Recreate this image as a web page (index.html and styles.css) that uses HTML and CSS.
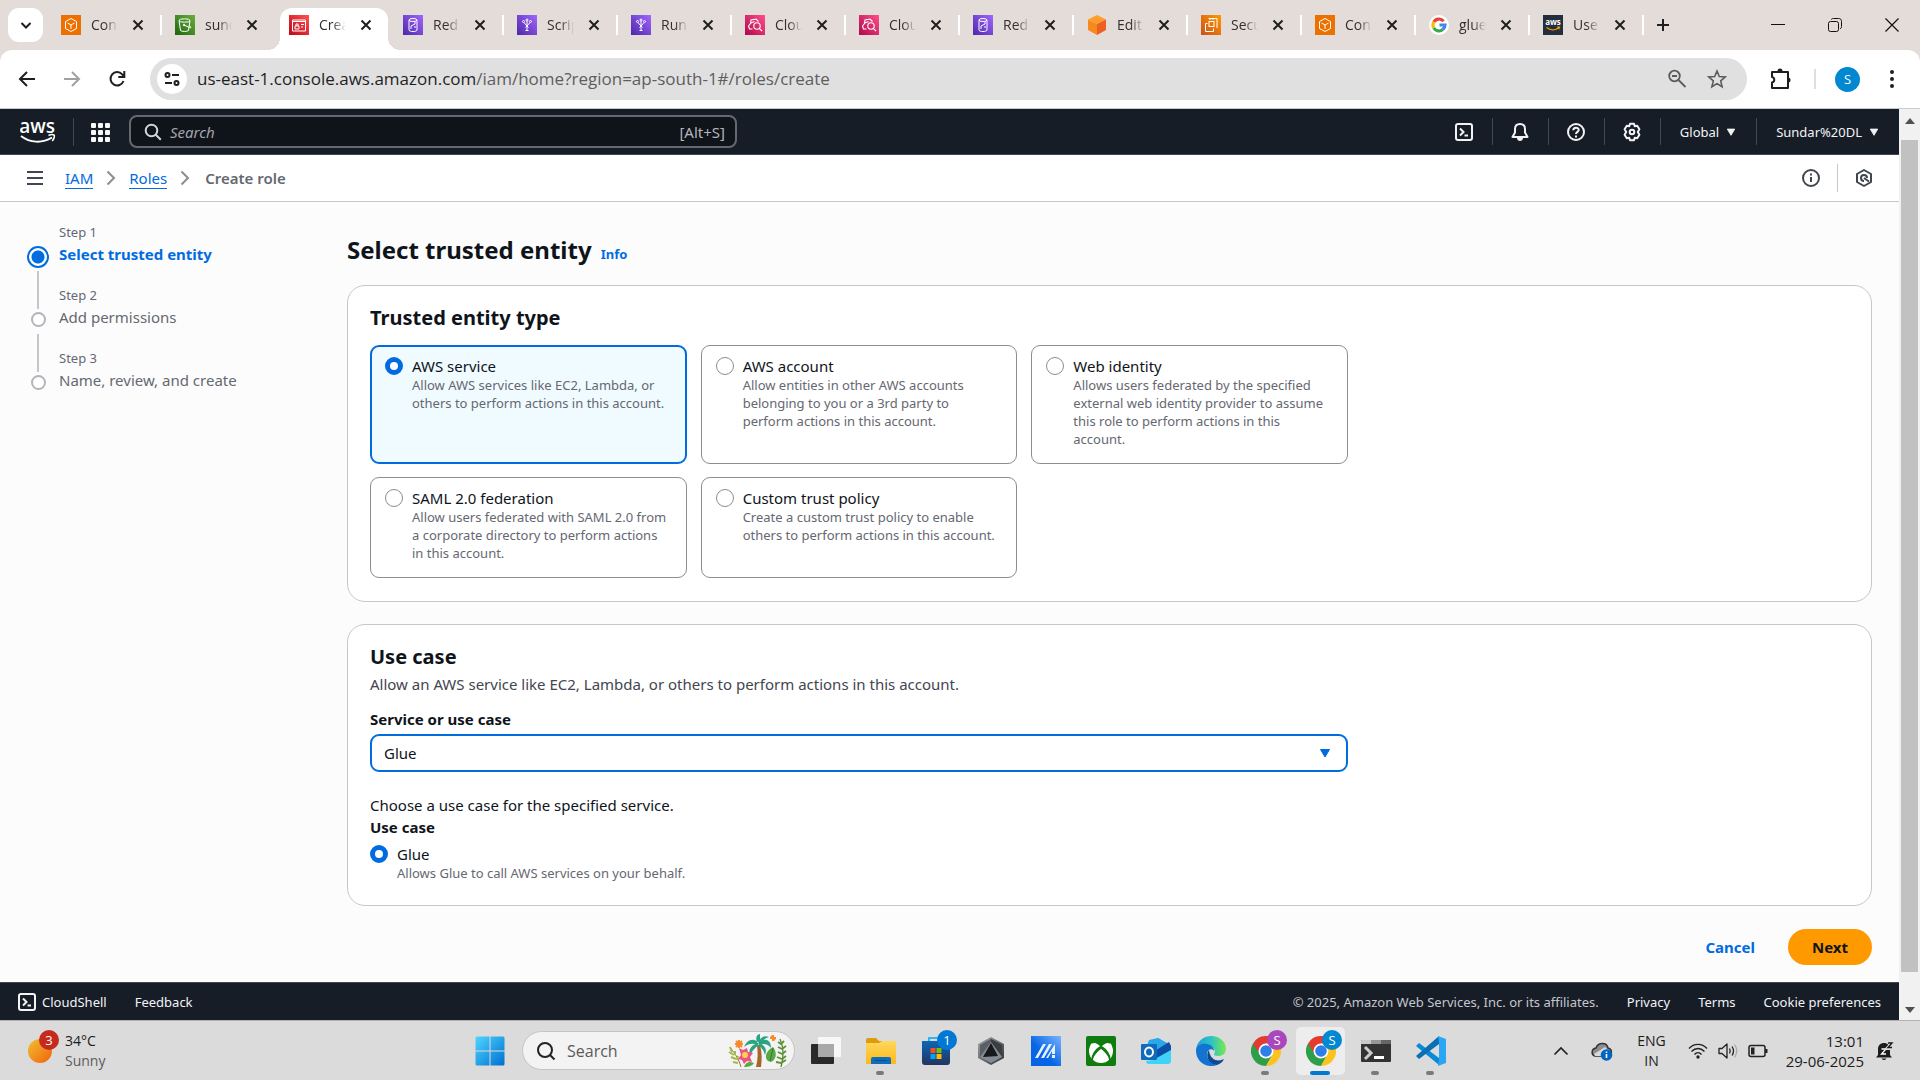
FILE: index.html
```html
<!DOCTYPE html>
<html lang="en">
<head>
<meta charset="utf-8">
<title>Create role | IAM | Global</title>
<link rel="stylesheet" href="styles.css">
</head>
<body>
<svg class="sprite" width="0" height="0" aria-hidden="true">
  <defs>
    <linearGradient id="g-green" x1="0" y1="1" x2="1" y2="0"><stop offset="0" stop-color="#1b660f"/><stop offset="1" stop-color="#6cae3e"/></linearGradient>
    <linearGradient id="g-red" x1="0" y1="1" x2="1" y2="0"><stop offset="0" stop-color="#bd0816"/><stop offset="1" stop-color="#ff5252"/></linearGradient>
    <linearGradient id="g-purple" x1="0" y1="1" x2="1" y2="0"><stop offset="0" stop-color="#4d27a8"/><stop offset="1" stop-color="#a166ff"/></linearGradient>
    <linearGradient id="g-pink" x1="0" y1="1" x2="1" y2="0"><stop offset="0" stop-color="#b0084d"/><stop offset="1" stop-color="#ff4f8b"/></linearGradient>
    <linearGradient id="g-orange" x1="0" y1="1" x2="1" y2="0"><stop offset="0" stop-color="#c8511b"/><stop offset="1" stop-color="#ff9900"/></linearGradient>
    <linearGradient id="g-win" x1="0" y1="0" x2="1" y2="1"><stop offset="0" stop-color="#4fd5ff"/><stop offset="1" stop-color="#006fd1"/></linearGradient>
    <linearGradient id="g-sun" x1="0" y1="0" x2="1" y2="1"><stop offset="0" stop-color="#f0c030"/><stop offset="1" stop-color="#f3620c"/></linearGradient>
    <linearGradient id="g-edge" x1="0" y1="0" x2="1" y2="0"><stop offset="0" stop-color="#199fdc"/><stop offset="0.5" stop-color="#2cc3c5"/><stop offset="1" stop-color="#78ea4c"/></linearGradient>
    <linearGradient id="g-ma" x1="0" y1="1" x2="1" y2="0"><stop offset="0.4" stop-color="#0565e4"/><stop offset="1" stop-color="#7ab4ff"/></linearGradient>
    <linearGradient id="g-folder" x1="0" y1="0" x2="0" y2="1"><stop offset="0" stop-color="#ffd75e"/><stop offset="1" stop-color="#fcb919"/></linearGradient>
    <linearGradient id="g-store" x1="0" y1="0" x2="0" y2="1"><stop offset="0" stop-color="#0b67b8"/><stop offset="1" stop-color="#243460"/></linearGradient>
    <linearGradient id="g-hex" x1="0" y1="0" x2="1" y2="1"><stop offset="0" stop-color="#a4a9ae"/><stop offset="1" stop-color="#2b2e33"/></linearGradient>
  </defs>
  <symbol id="fav-box" viewBox="0 0 20 20"><rect width="20" height="20" fill="#ed7100"/><g fill="none" stroke="#fff" stroke-width="1"><path d="M10 3.500l5.500 3v7L10 16.500l-5.500-3v-7z"/><path d="M6.500 8L10 10l3.500-2M10 10v4"/></g></symbol>
  <symbol id="fav-s3" viewBox="0 0 20 20"><rect width="20" height="20" fill="url(#g-green)"/><g fill="none" stroke="#fff" stroke-width="1"><ellipse cx="9.500" cy="5.500" rx="5.500" ry="1.700"/><path d="M4 5.500l1.500 10c1.500 1.300 6.500 1.300 8 0L15 5.500M9 10l5.500 2.500c2 .8 2-.5-.3-2"/><circle cx="9" cy="10" r=".8"/></g></symbol>
  <symbol id="fav-iam" viewBox="0 0 20 20"><rect width="20" height="20" fill="url(#g-red)"/><g fill="none" stroke="#fff" stroke-width="1"><path d="M3.500 5h13v11h-13z"/><path d="M3.500 6.500h13M6 11h4v3H6zM7 11V9h2v2M12 9.500h3M12 12h2"/></g></symbol>
  <symbol id="fav-redshift" viewBox="0 0 20 20"><rect width="20" height="20" fill="url(#g-purple)"/><g fill="none" stroke="#fff" stroke-width="1"><ellipse cx="10" cy="5" rx="4" ry="1.500"/><path d="M6 5v10c0 2 8 2 8 0V5M8 14v-3l4-2V7M12 13v-2"/></g></symbol>
  <symbol id="fav-glue" viewBox="0 0 20 20"><rect width="20" height="20" fill="url(#g-purple)"/><g fill="none" stroke="#fff" stroke-width="1"><path d="M7 7.500l3 3.500 3-3.500M10 6v9M8.500 12.500L10 11l1.500 1.500M8.500 15.500h3"/><circle cx="6.500" cy="6.500" r="1"/><circle cx="10" cy="5" r="1"/><circle cx="13.500" cy="6.500" r="1"/></g></symbol>
  <symbol id="fav-cloudwatch" viewBox="0 0 20 20"><rect width="20" height="20" fill="url(#g-pink)"/><g fill="none" stroke="#fff" stroke-width="1.100"><path d="M7.500 14H4.500l-1-3 2-2.500.5-3.500 5-1 2.500 2.500M6 8l3.500-1.500"/><circle cx="12" cy="11" r="3.200"/><path d="M14.300 13.300l2.700 2.700"/></g></symbol>
  <symbol id="fav-cube" viewBox="0 0 20 20"><path d="M10 0l9 4.500L10 9 1 4.500z" fill="#ff9e2c"/><path d="M1 4.500L10 9v11l-9-5z" fill="#f68a1e"/><path d="M19 4.500L10 9v11l9-5z" fill="#ee5f22"/></symbol>
  <symbol id="fav-ec2" viewBox="0 0 20 20"><rect width="20" height="20" fill="url(#g-orange)"/><g fill="none" stroke="#fff" stroke-width="1"><rect x="8" y="6.500" width="5" height="5"/><path d="M6.500 8.500h-2v8h8v-3M7.500 3.500h8.500v9.500M9 5V3.500M12 5V3.500"/></g></symbol>
  <symbol id="fav-google" viewBox="0 0 20 20"><circle cx="10" cy="10" r="10" fill="#fff"/><g fill="none" stroke-width="3.200"><path d="M14.600 6.200A6 6 0 0 0 4.800 7" stroke="#ea4335"/><path d="M4.800 7a6 6 0 0 0 0 6" stroke="#fbbc05"/><path d="M4.800 13a6 6 0 0 0 9 1.600" stroke="#34a853"/><path d="M13.800 14.600A6 6 0 0 0 16 10h-5.500" stroke="#4285f4"/></g></symbol>
  <symbol id="fav-aws" viewBox="0 0 20 20"><rect width="20" height="20" fill="#232f3e"/><text x="10" y="10" text-anchor="middle" font-family="Open Sans, sans-serif" font-size="8" font-weight="700" fill="#fff">aws</text><path d="M3.500 12.500c4 3 9 3 12.500.3M14 12h2.500l-.8 2.200" fill="none" stroke="#f90" stroke-width="1.200"/></symbol>
  <symbol id="ic-x" viewBox="0 0 20 20"><path d="M5.500 5.500l9 9M14.500 5.500l-9 9" fill="none" stroke="#1f1f1f" stroke-width="2"/></symbol>
  <symbol id="ic-shell" viewBox="0 0 20 20"><g fill="none" stroke="currentColor" stroke-width="2"><rect x="2" y="2" width="16" height="16" rx="2"/><path d="M6 6.500L9.500 10 6 13.500M10.500 13.500H14"/></g></symbol>
  <symbol id="ic-caret" viewBox="0 0 12 12"><path d="M1.500 2.500h9L6 10z" fill="currentColor" stroke="currentColor" stroke-linejoin="round"/></symbol>
  <symbol id="ic-chev" viewBox="0 0 10 16"><path d="M1.500 1.500L8 8l-6.500 6.500" fill="none" stroke="#8c8c94" stroke-width="2"/></symbol>
  <symbol id="app-chrome" viewBox="0 0 30 30"><path d="M15 15L2 7.500A15 15 0 0 0 15 30l6.500-11.500z" fill="#2f9e4b"/><path d="M15 30A15 15 0 0 0 28 7.500H15L21.500 18.500z" fill="#fcc31e"/><path d="M2 7.500A15 15 0 0 1 28 7.500H15L9 18.500z" fill="#e33b2e"/><circle cx="15" cy="15" r="7.500" fill="#fff"/><circle cx="15" cy="15" r="5.800" fill="#2f7de9"/></symbol>
</svg>

<header class="tabstrip">
  <button class="tab-search" aria-label="Search tabs"><svg width="16" height="16" viewBox="0 0 16 16"><path d="M3.500 6L8 10.500 12.500 6" fill="none" stroke="#1f1f1f" stroke-width="2"/></svg></button>
  <ul class="tabs">
    <li class="tab"><svg><use href="#fav-box"/></svg><span>Con</span><button aria-label="Close"><svg><use href="#ic-x"/></svg></button></li>
    <li class="tab plain"><svg><use href="#fav-s3"/></svg><span>sund</span><button aria-label="Close"><svg><use href="#ic-x"/></svg></button></li>
    <li class="tab plain active"><svg><use href="#fav-iam"/></svg><span>Crea</span><button aria-label="Close"><svg><use href="#ic-x"/></svg></button></li>
    <li class="tab"><svg><use href="#fav-redshift"/></svg><span>Red</span><button aria-label="Close"><svg><use href="#ic-x"/></svg></button></li>
    <li class="tab"><svg><use href="#fav-glue"/></svg><span>Scrip</span><button aria-label="Close"><svg><use href="#ic-x"/></svg></button></li>
    <li class="tab"><svg><use href="#fav-glue"/></svg><span>Run</span><button aria-label="Close"><svg><use href="#ic-x"/></svg></button></li>
    <li class="tab"><svg><use href="#fav-cloudwatch"/></svg><span>Clou</span><button aria-label="Close"><svg><use href="#ic-x"/></svg></button></li>
    <li class="tab"><svg><use href="#fav-cloudwatch"/></svg><span>Clou</span><button aria-label="Close"><svg><use href="#ic-x"/></svg></button></li>
    <li class="tab"><svg><use href="#fav-redshift"/></svg><span>Red</span><button aria-label="Close"><svg><use href="#ic-x"/></svg></button></li>
    <li class="tab"><svg><use href="#fav-cube"/></svg><span>Edit</span><button aria-label="Close"><svg><use href="#ic-x"/></svg></button></li>
    <li class="tab"><svg><use href="#fav-ec2"/></svg><span>Secu</span><button aria-label="Close"><svg><use href="#ic-x"/></svg></button></li>
    <li class="tab"><svg><use href="#fav-box"/></svg><span>Con</span><button aria-label="Close"><svg><use href="#ic-x"/></svg></button></li>
    <li class="tab"><svg><use href="#fav-google"/></svg><span>glue</span><button aria-label="Close"><svg><use href="#ic-x"/></svg></button></li>
    <li class="tab"><svg><use href="#fav-aws"/></svg><span>Use</span><button aria-label="Close"><svg><use href="#ic-x"/></svg></button></li>
  </ul>
  <button class="new-tab" aria-label="New tab"><svg width="16" height="16" viewBox="0 0 16 16"><path d="M8 2v12M2 8h12" stroke="#1f1f1f" stroke-width="2"/></svg></button>
  <div class="win-buttons">
    <button aria-label="Minimize"><svg width="14" height="14" viewBox="0 0 14 14"><path d="M0 6.500h14" stroke="#111"/></svg></button>
    <button aria-label="Restore"><svg width="14" height="14" viewBox="0 0 14 14"><g fill="none" stroke="#111"><rect x=".5" y="3.500" width="10" height="10" rx="2"/><path d="M3.500 1.500c0-1 1-1 2-1h5c2 0 3 1 3 3v5c0 1 0 2-1.500 2"/></g></svg></button>
    <button aria-label="Close window"><svg width="14" height="14" viewBox="0 0 14 14"><path d="M.5.5l13 13M13.500.5l-13 13" stroke="#111" stroke-width="1.200"/></svg></button>
  </div>
</header>

<div class="toolbar-back">
<div class="toolbar">
  <div class="nav-buttons">
    <button aria-label="Back"><svg width="20" height="20" viewBox="0 0 20 20"><path d="M18 10H3.500M10 3l-7 7 7 7" fill="none" stroke="#1f1f1f" stroke-width="2"/></svg></button>
    <button aria-label="Forward"><svg width="20" height="20" viewBox="0 0 20 20"><path d="M2 10h14.500M10 3l7 7-7 7" fill="none" stroke="#a0a0a0" stroke-width="2"/></svg></button>
    <button aria-label="Reload"><svg width="20" height="20" viewBox="0 0 20 20"><path d="M16.500 12a6.700 6.700 0 1 1-1.300-6.700L17 7.500M17.300 2v6h-6" fill="none" stroke="#1f1f1f" stroke-width="2"/></svg></button>
  </div>
  <div class="omnibox">
    <button class="site-info" aria-label="Site information"><svg width="18" height="18" viewBox="0 0 18 18"><g fill="none" stroke="#1f1f1f" stroke-width="2"><circle cx="4.500" cy="5" r="2"/><path d="M9 5h7M2 13h7"/><circle cx="13.500" cy="13" r="2"/></g></svg></button>
    <span class="url">us-east-1.console.aws.amazon.com<span class="path">/iam/home?region=ap-south-1#/roles/create</span></span>
    <button aria-label="Zoom"><svg width="20" height="20" viewBox="0 0 20 20"><g fill="none" stroke="#5b5b5b" stroke-width="1.800"><circle cx="7.500" cy="7" r="5.300"/><path d="M11.500 11l7 7M5 7h5"/></g></svg></button>
    <button aria-label="Bookmark"><svg width="20" height="20" viewBox="0 0 20 20"><path d="M10 2l2.300 5.500 5.900.5-4.500 3.900 1.400 5.800L10 14.600l-5.100 3.100 1.400-5.800L1.800 8l5.900-.5z" fill="none" stroke="#5b5b5b" stroke-width="1.600"/></svg></button>
  </div>
  <button class="ext" aria-label="Extensions"><svg width="24" height="24" viewBox="0 0 24 24"><path d="M3 5h16v16H3v-5.500c3-.5 3-5 0-5.500z" fill="none" stroke="#1f1f1f" stroke-width="2" stroke-linejoin="round"/><path d="M8.500 5V4a2.500 2.500 0 0 1 5 0v1zM19 10.500a2.500 2.500 0 0 1 0 5z" fill="#1f1f1f"/></svg></button>
  <span class="rule"></span>
  <button class="avatar">S</button>
  <button class="dots" aria-label="Menu"><svg width="6" height="20" viewBox="0 0 6 20"><g fill="#1f1f1f"><circle cx="3" cy="3" r="2"/><circle cx="3" cy="10" r="2"/><circle cx="3" cy="17" r="2"/></g></svg></button>
</div>
</div>

<div class="viewport">
  <div class="console">
    <header class="aws-header">
      <a class="logo" href="#" aria-label="AWS home"><svg width="36" height="28" viewBox="0 0 36 28"><text x="17" y="15" text-anchor="middle" font-family="Open Sans, sans-serif" font-size="19" font-weight="600" fill="#fff">aws</text><path d="M1 18c9 7 21 7.500 31 1.500" fill="none" stroke="#fff" stroke-width="2"/><path d="M28.500 17.500c2-1 4.500-1 5.500-.5s0 4-1.800 6" fill="none" stroke="#fff" stroke-width="1.600"/></svg></a>
      <button class="services" aria-label="Services"><svg width="20" height="20" viewBox="0 0 20 20"><g fill="#f9f9fa"><rect x="1" y="1" width="5" height="5" rx="1"/><rect x="8" y="1" width="5" height="5" rx="1"/><rect x="15" y="1" width="5" height="5" rx="1"/><rect x="1" y="8" width="5" height="5" rx="1"/><rect x="8" y="8" width="5" height="5" rx="1"/><rect x="15" y="8" width="5" height="5" rx="1"/><rect x="1" y="15" width="5" height="5" rx="1"/><rect x="8" y="15" width="5" height="5" rx="1"/><rect x="15" y="15" width="5" height="5" rx="1"/></g></svg></button>
      <label class="aws-search">
        <svg width="18" height="18" viewBox="0 0 18 18"><g fill="none" stroke="#d5d5da" stroke-width="2"><circle cx="7.500" cy="7.500" r="5.800"/><path d="M11.800 11.800l5 5"/></g></svg>
        <input type="text" placeholder="Search" aria-label="Search">
        <span>[Alt+S]</span>
      </label>
      <ul class="aws-tools">
        <li><button aria-label="CloudShell"><svg width="20" height="20"><use href="#ic-shell"/></svg></button></li>
        <li><button aria-label="Notifications"><svg width="20" height="20" viewBox="0 0 20 20"><path d="M10 2c-3.200 0-5 2-5 5v3.500L2.500 15h15L15 10.500V7c0-3-1.800-5-5-5z" fill="none" stroke="#f3f3f7" stroke-width="2" stroke-linejoin="round"/><path d="M7 16h6c0 4-6 4-6 0z" fill="#f3f3f7"/></svg></button></li>
        <li><button aria-label="Help"><svg width="20" height="20" viewBox="0 0 20 20"><g fill="none" stroke="#f3f3f7" stroke-width="2"><circle cx="10" cy="10" r="8"/><path d="M7.300 8.300c0-3.500 5.400-3.300 5.400-.3 0 1.800-2.700 2-2.700 4M10 13.500v2"/></g></svg></button></li>
        <li><button aria-label="Settings"><svg width="20" height="20" viewBox="0 0 20 20"><g fill="none" stroke="#f3f3f7" stroke-width="2" stroke-linejoin="round"><path d="M8 1.800h4l.7 2.500 2.500-.6 2.200 3.600L15.800 10l1.600 2.700-2.200 3.600-2.500-.6-.7 2.500H8l-.7-2.500-2.500.6-2.200-3.600L4.200 10 2.600 7.300l2.200-3.600 2.500.6z"/><circle cx="10" cy="10" r="2.300"/></g></svg></button></li>
        <li class="menu"><button>Global <svg width="10" height="10"><use href="#ic-caret"/></svg></button></li>
        <li class="menu account"><button>Sundar%20DL <svg width="10" height="10"><use href="#ic-caret"/></svg></button></li>
      </ul>
    </header>

    <div class="crumb-bar">
      <button class="burger" aria-label="Open navigation"><svg width="16" height="16" viewBox="0 0 16 16"><path d="M0 2h16M0 8h16M0 14h16" stroke="#424650" stroke-width="2"/></svg></button>
      <nav class="crumbs">
        <a href="#">IAM</a><svg width="10" height="16"><use href="#ic-chev"/></svg><a href="#">Roles</a><svg width="10" height="16"><use href="#ic-chev"/></svg><strong>Create role</strong>
      </nav>
      <button class="info-btn" aria-label="Info panel"><svg width="20" height="20" viewBox="0 0 20 20"><g fill="none" stroke="#424650" stroke-width="2"><circle cx="10" cy="10" r="8"/><path d="M10 9v5M10 5.500v2"/></g></svg></button>
      <button class="hex-btn" aria-label="Assistant"><svg width="20" height="20" viewBox="0 0 20 20"><path d="M10 2l7 4v8l-7 4-7-4V6z" fill="none" stroke="#424650" stroke-width="2" stroke-linejoin="round"/><path d="M13 10a3 3 0 1 0-3 3M10 10l5 3.500" fill="none" stroke="#424650" stroke-width="2"/></svg></button>
    </div>

    <main class="wizard">
      <ol class="steps">
        <li class="current"><i></i><small>Step 1</small><a href="#">Select trusted entity</a></li>
        <li><i></i><small>Step 2</small><span>Add permissions</span></li>
        <li><i></i><small>Step 3</small><span>Name, review, and create</span></li>
      </ol>
      <form class="form">
        <div class="title-row"><h1>Select trusted entity</h1><a href="#">Info</a></div>

        <section class="card">
          <h2>Trusted entity type</h2>
          <div class="tiles">
            <label class="tile selected"><input type="radio" name="entity" checked><span><b>AWS service</b><small>Allow AWS services like EC2, Lambda, or<br>others to perform actions in this account.</small></span></label>
            <label class="tile"><input type="radio" name="entity"><span><b>AWS account</b><small>Allow entities in other AWS accounts<br>belonging to you or a 3rd party to<br>perform actions in this account.</small></span></label>
            <label class="tile"><input type="radio" name="entity"><span><b>Web identity</b><small>Allows users federated by the specified<br>external web identity provider to assume<br>this role to perform actions in this<br>account.</small></span></label>
            <label class="tile"><input type="radio" name="entity"><span><b>SAML 2.0 federation</b><small>Allow users federated with SAML 2.0 from<br>a corporate directory to perform actions<br>in this account.</small></span></label>
            <label class="tile"><input type="radio" name="entity"><span><b>Custom trust policy</b><small>Create a custom trust policy to enable<br>others to perform actions in this account.</small></span></label>
          </div>
        </section>

        <section class="card use-case">
          <h2>Use case</h2>
          <p class="sub">Allow an AWS service like EC2, Lambda, or others to perform actions in this account.</p>
          <label class="field-label" for="service">Service or use case</label>
          <div class="select-wrap"><select id="service"><option>Glue</option></select><svg width="12" height="12"><use href="#ic-caret"/></svg></div>
          <p class="choose">Choose a use case for the specified service.</p>
          <h3>Use case</h3>
          <label class="option"><input type="radio" name="usecase" checked><span><b>Glue</b><small>Allows Glue to call AWS services on your behalf.</small></span></label>
        </section>

        <div class="actions"><button type="button" class="cancel">Cancel</button><button type="button" class="next">Next</button></div>
      </form>
    </main>

    <footer class="aws-footer">
      <button class="shell"><svg width="20" height="20"><use href="#ic-shell"/></svg>CloudShell</button>
      <a href="#">Feedback</a>
      <span class="copy">© 2025, Amazon Web Services, Inc. or its affiliates.</span>
      <a href="#">Privacy</a>
      <a href="#">Terms</a>
      <a href="#">Cookie preferences</a>
    </footer>
  </div>
  <div class="scrollbar" aria-hidden="true">
    <svg width="12" height="8" viewBox="0 0 12 8"><path d="M1 7l5-6 5 6z" fill="#505050"/></svg>
    <i></i>
    <svg width="12" height="8" viewBox="0 0 12 8"><path d="M1 1l5 6 5-6z" fill="#505050"/></svg>
  </div>
</div>

<div class="taskbar">
  <button class="weather">
    <span class="sun"><svg width="24" height="24" viewBox="0 0 24 24"><circle cx="12" cy="12" r="12" fill="url(#g-sun)"/></svg><em class="badge red">3</em></span>
    <span class="lines"><span>34°C</span><span class="dim">Sunny</span></span>
  </button>
  <div class="apps">
    <button class="app" aria-label="Start"><svg width="30" height="30" viewBox="0 0 30 30"><path d="M2 0.500h12.500v14H.5V2Q.5.500 2 .500zM15.500.500H28q1.500 0 1.500 1.500v12.500h-14zM.5 15.500h14v14H2Q.5 29.500.5 28zM15.500 15.500h14V28q0 1.500-1.500 1.500H15.500z" fill="url(#g-win)"/></svg></button>
    <label class="task-search">
      <svg width="20" height="20" viewBox="0 0 20 20"><g fill="none" stroke="#222" stroke-width="2"><circle cx="9" cy="9" r="7"/><path d="M14 14l4.500 4.500"/></g></svg>
      <input type="text" placeholder="Search" aria-label="Search Windows">
      <svg width="60" height="34" viewBox="0 0 60 34">
        <path d="M29 33c2-8 2-14 1-22h3c2 8 2 14 1 22z" fill="#a8642a"/>
        <g fill="#2aa583"><path d="M32 9C26 3 20 6 17 13c5-4 9-4 14-2zM32 9c6-6 12-3 12 5-3-4-7-5-12-3zM31 9c-7 2-10 7-8 13 2-5 5-9 10-11zM32 9c7 3 8 7 6 12-1-5-4-8-8-10zM31 10c-3-6-2-9 2-10 0 3 0 6 1 10zM32 9c1-6 5-8 10-6-4 1-7 4-9 8z"/></g>
        <g fill="#58a946"><path d="M46 13c4 5 4 12-2 15-8-1-6-11 2-15zM17 33c2-5 5-6 10-4-2 3-5 4-10 4z"/></g>
        <path d="M43 27c1-4 2-8 3-13" stroke="#2f7c35" fill="none"/>
        <path d="M3 13c3 5 8 9 11 20" stroke="#8a7c2c" fill="none"/>
        <path d="M3 13l2 5M2 18l5 3M4 23l5 2M6 28l5 1M8 17v4M11 22l-1 4" stroke="#a4b84c" stroke-width="2" fill="none"/>
        <path d="M53 5c4 9 4 18 1 28" stroke="#4c7c2d" fill="none" stroke-width="1.200"/>
        <path d="M51 8l3 2 3-3M51 13l4 2 4-3M51 18l4 2 4-3M50 23l5 2 4-3M49 28l5 1 5-3" stroke="#5f9236" fill="none" stroke-width="1.800"/>
        <path d="M12 14l4 2 4-2 1 4 5 1-3 4 2 5-5-1-3 3-2-4-4-1 3-4z" fill="#ef5284"/><circle cx="18" cy="21" r="3" fill="#ffd34a"/>
        <g stroke="#f68b2c" stroke-width="2"><path d="M8 10h8M12 6v8M9 7l6 6M15 7l-6 6M43 4h6M46 1v6M44 2l4 4"/></g>
      </svg>
    </label>
    <button class="app" aria-label="Task view"><svg width="30" height="30" viewBox="0 0 30 30"><rect x="0" y="8" width="23" height="20" rx="1" fill="#292929"/><rect x="7" y="1" width="23" height="20" rx="1" fill="#f7f7f7"/><rect x="7" y="8" width="16" height="13" fill="#a9a9a9"/></svg></button>
    <button class="app open" aria-label="File Explorer"><svg width="30" height="30" viewBox="0 0 30 30"><path d="M0 4q0-2 2-2h8l3 3h17v8H0z" fill="#dc9c0c"/><path d="M0 7h13l3-2h14v23H0z" fill="url(#g-folder)"/><path d="M5 28v-5q0-2 2-2h16q2 0 2 2v5z" fill="#0f6cbd"/><path d="M9 24.500h12" stroke="#0a4e91"/></svg></button>
    <button class="app" aria-label="Microsoft Store"><svg width="30" height="30" viewBox="0 0 30 30"><path d="M8 6V2h14v4" fill="none" stroke="#2eb3f5" stroke-width="2"/><path d="M1 5h28v21q0 3-3 3H4q-3 0-3-3z" fill="url(#g-store)"/><path d="M9.500 12h5v5h-5z" fill="#f25022"/><path d="M15.500 12h5v5h-5z" fill="#7fba00"/><path d="M9.500 18h5v5h-5z" fill="#00a4ef"/><path d="M15.500 18h5v5h-5z" fill="#ffb900"/></svg><em class="badge blue">1</em></button>
    <button class="app" aria-label="Armoury Crate"><svg width="30" height="30" viewBox="0 0 30 30"><path d="M15 1l13 7v14l-13 7-13-7V8z" fill="url(#g-hex)"/><path d="M15 3l11 6v12l-11 6-11-6V9z" fill="#5a5f66"/><path d="M15 3l11 6v12L15 6z" fill="#3a3d42"/><path d="M15 6L4 21l11 6 11-6z" fill="#858b92"/><path d="M15 7L7 21l15-1z" fill="#17191d"/></svg></button>
    <button class="app" aria-label="MyASUS"><svg width="30" height="30" viewBox="0 0 30 30"><path d="M0 0h30v30H0z" fill="url(#g-ma)"/><path d="M4 22L12 8h3L7 22zM10 22l8-14h3l-8 14zM15 22l9-14v10h-3v-3l-4 7zM21 19h3v3h-3z" fill="#e6f0ff"/></svg></button>
    <button class="app" aria-label="Xbox"><svg width="30" height="30" viewBox="0 0 30 30"><rect width="30" height="30" rx="2" fill="#107c10"/><circle cx="15" cy="15" r="12" fill="#fff"/><path d="M6 7c3-2 6 0 9 3 3-3 6-5 9-3-3-5-15-5-18 0zM15 10C9 14 6 19 6 24c1-5 5-9 9-12 4 3 8 7 9 12 0-5-3-10-9-14zM9 5q3 1 6 4 3-3 6-4-6-4-12 0z" fill="#107c10" stroke="#107c10" stroke-width="1.500"/></svg></button>
    <button class="app" aria-label="Outlook"><svg width="30" height="30" viewBox="0 0 30 30"><path d="M5 9L17 2l13 8v10L5 24z" fill="#1490df"/><path d="M14 14l14-8 2 4v5L16 26z" fill="#0c4fa5"/><path d="M8 4l9-2 9 5-12 8-9-3z" fill="#28a8ea"/><path d="M12 24l18-10v11q0 3-3 3H8q-3 0-3-3z" fill="#3fd3f8"/><rect x="0" y="8" width="16" height="16" rx="1" fill="#0f6cbd"/><ellipse cx="8" cy="16" rx="4" ry="4.500" fill="none" stroke="#fff" stroke-width="2"/></svg></button>
    <button class="app" aria-label="Edge"><svg width="30" height="30" viewBox="0 0 30 30"><path d="M0 14C1 4 9 0 15 0c9 0 15 6 15 13 0 5-4 7-8 7-3 0-4-1-4-2 2-2 1-7-5-8C8 8 2 10 0 14z" fill="url(#g-edge)"/><path d="M0 15c0-6 6-8 11-7 5 1 7 4 7 7-2-3-6-2-7 2-1 6 4 10 10 12C10 33 0 25 0 15z" fill="#1273d0"/><path d="M13 14c-4 5-1 14 8 15 3-1 6-3 7-6-5 3-14 2-15-9z" fill="#0c4a94"/></svg></button>
    <button class="app open" aria-label="Chrome"><svg width="30" height="30"><use href="#app-chrome"/></svg><em class="badge purple">S</em></button>
    <button class="app open focus" aria-label="Chrome active"><svg width="30" height="30"><use href="#app-chrome"/></svg><em class="badge sky">S</em></button>
    <button class="app open" aria-label="Terminal"><svg width="30" height="30" viewBox="0 0 30 30"><rect x="0" y="4" width="30" height="22" rx="1" fill="#333"/><path d="M0 8V5q0-1 1-1h9v4z" fill="#c9c9c9"/><path d="M10 4h10v4H10z" fill="#979797"/><path d="M20 4h9q1 0 1 1v3H20z" fill="#666"/><path d="M4 11l6 6-6 6" fill="none" stroke="#ccc" stroke-width="3"/><path d="M13 21.500h10" stroke="#fff" stroke-width="3"/></svg></button>
    <button class="app open" aria-label="Visual Studio Code"><svg width="30" height="30" viewBox="0 0 30 30"><path d="M0 10l3-3 20 15v7z" fill="#0a8ad6"/><path d="M0 20l3 3L23 8V0z" fill="#0a6fb4"/><path d="M22 0l8 3v24l-8 3 1-6V6z" fill="#2aa6f5"/></svg></button>
  </div>
  <div class="tray">
    <button aria-label="Show hidden icons"><svg width="16" height="16" viewBox="0 0 16 16"><path d="M1.500 11.500L8 5l6.500 6.500" fill="none" stroke="#222" stroke-width="1.700"/></svg></button>
    <button class="drive" aria-label="OneDrive"><svg width="22" height="20" viewBox="0 0 22 20"><path d="M4 15c-4-1-4-7 1-8 2-6 11-6 12 0 5 1 4 8 0 8z" fill="#8d8d8d" stroke="#333" stroke-width="1.500"/><path d="M3 13l11-7 5 5-8 4H4z" fill="#d9d9d9"/><circle cx="15.500" cy="14" r="5.800" fill="#0067c0"/><path d="M15.500 13v4M15.500 10.500v1.500" stroke="#fff" stroke-width="1.600"/></svg></button>
    <button class="lang"><span>ENG</span><span>IN</span></button>
    <button class="quick" aria-label="Network, sound, battery">
      <svg width="20" height="18" viewBox="0 0 20 18"><g fill="none" stroke="#222" stroke-width="1.400"><path d="M1 6.500c5-5.500 13-5.500 18 0M3.500 9.500c4-4 9-4 13 0M6.500 12.500c2-2.500 5-2.500 7 0"/></g><circle cx="10" cy="15" r="1.700" fill="#222"/></svg>
      <svg width="20" height="18" viewBox="0 0 20 18"><g fill="none" stroke="#222" stroke-width="1.300"><path d="M1 6.500h3L9 2v14l-5-4.500H1z" stroke-linejoin="round"/><path d="M11.500 6.500q1.500 2.500 0 5M14 4.500q3 4.500 0 9"/><path d="M16.500 2.500q4.500 6.500 0 13" stroke="#aaa"/></g></svg>
      <svg width="20" height="18" viewBox="0 0 20 18"><rect x="1" y="3.500" width="16" height="11" rx="2" fill="none" stroke="#222" stroke-width="1.500"/><path d="M3 5.500h3.500v7H3zM17 7h2.500v4H17z" fill="#222"/></svg>
    </button>
    <button class="clock"><span>13:01</span><span>29-06-2025</span></button>
    <button aria-label="Notifications"><svg width="18" height="20" viewBox="0 0 18 20"><path d="M2 14V8c0-8 12-8 12 0v6l2 2.500H0zM5.500 17.500h5q-2.500 3-5 0z" fill="#1c1c1c"/><path d="M5.500 8H10l-4.500 5H10" fill="none" stroke="#fff" stroke-width="1.300"/><path d="M12 2h4.500L12 7h4.500" fill="none" stroke="#dbdbdb" stroke-width="4"/><path d="M12 2h4L12 6.500h4" fill="none" stroke="#1c1c1c" stroke-width="1.400"/></svg></button>
  </div>
</div>
</body>
</html>
```
FILE: styles.css
```css
* { box-sizing: border-box; }
body {
  margin: 0;
  min-height: 100vh;
  display: flex;
  flex-direction: column;
  background: #fcfcfd;
  color: #0f141a;
  font-family: "Open Sans", "Noto Sans", sans-serif;
  font-size: 14px;
  line-height: 20px;
}
button, input, select { font: inherit; color: inherit; }
button { background: none; border: 0; padding: 0; cursor: pointer; }
ul, ol { list-style: none; margin: 0; padding: 0; }
h1, h2, h3, p { margin: 0; }
svg { display: block; flex: none; }
small { font-size: 13px; }
a { text-decoration: none; color: #006ce0; }
.sprite { position: absolute; }

/* Browser tabs */
.tabstrip { display: flex; height: 50px; align-items: flex-start; background: #e4dcd9; overflow: hidden; }
.tab-search { width: 35px; height: 34px; margin: 8px 6px 0 8px; border-radius: 11px; background: #fff; display: grid; place-items: center; flex: none; }
.tabs { display: flex; height: 50px; padding-top: 8px; }
.tab { position: relative; width: 114px; height: 42px; padding: 0 12px 8px; display: flex; align-items: center; color: #303030; }
.tab svg { width: 20px; height: 20px; }
.tab span { width: 27px; margin: 0 10px; overflow: hidden; white-space: nowrap; -webkit-mask-image: linear-gradient(90deg, #000 50%, transparent); mask-image: linear-gradient(90deg, #000 50%, transparent); }
.tab::after { content: ""; position: absolute; right: 1px; top: 7px; width: 2px; height: 20px; background: #fff; }
.tab.plain::after { display: none; }
.tab.active { z-index: 1; }
.tab.active::before { content: ""; position: absolute; z-index: -1; inset: 0 3px; background: #fff; border-radius: 12px 12px 0 0; }
.tab.active::after {
  display: block; z-index: -2; inset: auto -9px 0; width: auto; height: 12px;
  background:
    radial-gradient(circle at 0 0, transparent 12px, #fff 12px) left / 12px 12px no-repeat,
    radial-gradient(circle at 100% 0, transparent 12px, #fff 12px) right / 12px 12px no-repeat;
}
.new-tab { margin: 17px 0 0 10px; }
.win-buttons { margin-left: auto; display: flex; }
.win-buttons button { width: 57px; height: 50px; display: grid; place-items: center; }

/* Browser toolbar */
.toolbar-back { background: #e4dcd9; }
.toolbar { display: flex; align-items: center; height: 59px; padding: 0 25px 0 17px; background: #fff; border-bottom: 1px solid #c9cccd; border-radius: 12px 12px 0 0; }
.nav-buttons { display: flex; gap: 25px; margin-right: 23px; }
.omnibox { flex: 1; display: flex; align-items: center; height: 42px; padding: 0 20px 0 7px; border-radius: 21px; background: #e0e0e0; gap: 20px; }
.site-info { width: 30px; height: 30px; border-radius: 50%; background: #fff; display: grid; place-items: center; margin-right: -10px; }
.url { flex: 1; font-size: 17px; line-height: 24px; color: #1f1f1f; }
.path { color: #5e5e5e; }
.ext { margin-left: 22px; }
.rule { width: 2px; height: 20px; margin: 0 19px 0 21px; background: #e4dcd9; }
.avatar { width: 25px; height: 25px; border-radius: 50%; background: #0288d1; color: #fff; font-size: 13px; text-align: center; }
.dots { margin-left: 29px; }

/* Page area and its scrollbar */
.viewport { flex: 1; display: flex; }
.console { flex: 1; min-width: 0; display: flex; flex-direction: column; font-family: "Noto Sans", "Open Sans", sans-serif; font-size: 15px; }
.scrollbar { width: 21px; background: #f1f1f1; padding: 8px 0 6px; display: flex; flex-direction: column; align-items: center; }
.scrollbar i { flex: 1; width: 17px; margin: 15px 0 34px; background: #c1c1c1; }

/* Console header */
.aws-header { display: flex; align-items: center; height: 46px; padding-left: 20px; background: #161d26; border-bottom: 1px solid #424650; color: #f3f3f7; }
.logo { padding-right: 17px; border-right: 1px solid #424650; }
.services { margin: 0 19px 0 16px; }
.aws-search { display: flex; align-items: center; width: 608px; height: 33px; padding: 0 10px 0 13px; gap: 8px; border: 2px solid #656871; border-radius: 8px; background: #0f141a; color: #b4b4bb; }
.aws-search input { flex: 1; min-width: 0; padding: 0; border: 0; background: none; outline: 0; }
.aws-search input::placeholder { color: #a4a4ad; font-style: italic; }
.aws-tools { margin-left: auto; display: flex; align-items: center; font-size: 13px; }
.aws-tools li { width: 56px; height: 27px; display: flex; align-items: center; justify-content: center; border-left: 1px solid #424650; }
.aws-tools li:first-child { border-left: 0; }
.aws-tools .menu { width: auto; padding: 0 20px 0 19px; }
.aws-tools .menu button { display: flex; align-items: center; gap: 7px; }

/* Breadcrumbs */
.crumb-bar { display: flex; align-items: center; height: 47px; padding: 0 25px 0 27px; background: #fff; border-bottom: 1px solid #c6c6cd; }
.crumbs { flex: 1; display: flex; align-items: center; gap: 13px; margin-left: 22px; }
.crumbs a { border-bottom: 1px solid #006ce0; }
.crumbs strong { margin-left: 2px; font-weight: 600; color: #656871; }
.info-btn { padding: 4px 16px 4px 0; border-right: 1px solid #c6c6cd; }
.hex-btn { margin-left: 16px; }

/* Wizard */
.wizard { flex: 1; display: grid; grid-template-columns: 320px minmax(0, 1fr); padding: 20px 27px 0; }
.steps li { position: relative; height: 63px; padding-left: 32px; display: flex; flex-direction: column; color: #656871; }
.steps small { line-height: 21px; }
.steps span, .steps a { line-height: 23px; }
.steps .current a { font-weight: 700; }
.steps i { position: absolute; left: 4px; top: 27px; width: 15px; height: 15px; border: 2px solid #b4b4bb; border-radius: 50%; background: #fff; }
.steps .current i { left: 0; top: 24px; width: 22px; height: 22px; border-color: #006ce0; background: radial-gradient(#006ce0 6px, #fff 7px); }
.steps li:not(:last-child)::after { content: ""; position: absolute; left: 10px; top: 49px; width: 2px; height: 38px; background: #c6c6cd; }
.title-row { display: flex; align-items: baseline; gap: 9px; margin: 12px 0 15px; line-height: 32px; }
h1 { font-size: 24px; font-weight: 700; line-height: 32px; }
.title-row a { font-size: 13px; font-weight: 700; }
.card { padding: 19px 22px 23px; border: 1px solid #c6c6cd; border-radius: 18px; background: #fff; }
h2 { font-size: 20px; font-weight: 700; line-height: 26px; }
.tiles { display: grid; grid-template-columns: repeat(3, minmax(0, 1fr)); gap: 13px 14px; max-width: 978px; margin-top: 14px; }
.tile, .option { display: flex; gap: 9px; }
.tile { padding: 10px 0 15px 14px; border: 1px solid #8c8c94; border-radius: 9px; }
.tile.selected { padding: 9px 0 14px 13px; border: 2px solid #006ce0; background: #f0fbff; }
.tile span, .option span { display: flex; flex-direction: column; }
.tile b, .option b { font-weight: 400; }
.tile small, .option small { color: #656871; line-height: 18px; white-space: nowrap; }
input[type="radio"] { appearance: none; flex: none; width: 18px; height: 18px; margin: 1px 0 0; border: 1px solid #8c8c94; border-radius: 50%; background: #fff; }
input[type="radio"]:checked { border: 5px solid #006ce0; }
.use-case { margin-top: 22px; }
.sub { color: #424650; margin: 4px 0 15px; }
.field-label { display: block; font-weight: 700; margin-bottom: 5px; }
.select-wrap { position: relative; max-width: 978px; color: #006ce0; }
.select-wrap select { appearance: none; display: block; width: 100%; height: 38px; padding: 0 12px; border: 2px solid #006ce0; border-radius: 9px; background: #fff; color: #0f141a; }
.select-wrap svg { position: absolute; right: 17px; top: 13px; }
.choose { margin-top: 23px; }
h3 { font-size: 15px; line-height: 24px; font-weight: 700; }
.option { margin-top: 5px; }
.actions { display: flex; justify-content: flex-end; align-items: center; gap: 33px; padding: 23px 0 16px; font-weight: 700; }
.cancel { color: #006ce0; }
.next { width: 84px; height: 36px; border-radius: 18px; background: #ff9900; }

/* Console footer */
.aws-footer { display: flex; align-items: center; gap: 28px; height: 38px; padding: 0 18px 0 17px; background: #161d26; border-top: 1px solid #424650; font-size: 13px; color: #f3f3f7; }
.aws-footer a { color: #f3f3f7; }
.shell { display: flex; align-items: center; gap: 5px; }
.copy { margin-left: auto; color: #c6c6cd; }

/* Taskbar */
.taskbar { display: grid; grid-template-columns: 1fr auto 1fr; align-items: center; height: 60px; background: #dbdbdb; border-top: 1px solid #b5b0b0; }
.weather { display: flex; align-items: center; gap: 13px; padding-left: 28px; text-align: left; }
.sun { position: relative; }
.lines, .lang, .clock { display: flex; flex-direction: column; color: #1b1b1b; }
.dim { color: #5c5c5c; }
.badge { position: absolute; right: -4px; top: -3px; width: 20px; height: 20px; border-radius: 50%; color: #fff; font-size: 13px; font-style: normal; line-height: 20px; text-align: center; }
.sun .badge { right: -7px; top: -9px; }
.red { background: #c42b1c; }
.blue { background: #0078d4; }
.purple { background: #ab47bc; }
.sky { background: #0288d1; }
.apps { display: flex; align-items: center; }
.app { position: relative; width: 49px; height: 48px; margin: 0 3px; display: grid; place-items: center; }
.app .badge { right: 3px; top: 3px; }
.app.open::after { content: ""; position: absolute; left: 20px; bottom: 0; width: 8px; height: 4px; border-radius: 2px; background: #7a7a7a; }
.app.focus { background: #ededed; border-radius: 5px; }
.app.focus::after { left: 14px; width: 20px; background: #0078d4; }
.task-search { display: flex; align-items: center; gap: 11px; width: 273px; height: 39px; margin: 0 3px 0 5px; padding: 0 7px 0 13px; border: 1px solid #c4c4c4; border-radius: 20px; background: #f3f3f3; }
.task-search input { flex: 1; min-width: 0; padding: 0; border: 0; background: none; outline: 0; font-size: 16px; }
.task-search input::placeholder { color: #5a5a5a; }
.tray { display: flex; align-items: center; justify-content: flex-end; padding-right: 26px; gap: 12px; }
.lang { align-items: center; margin: 0 10px 0 12px; }
.drive { margin-left: 10px; }
.quick { display: flex; gap: 10px; }
.clock { align-items: flex-end; margin-left: 6px; font-size: 15px; }
```
